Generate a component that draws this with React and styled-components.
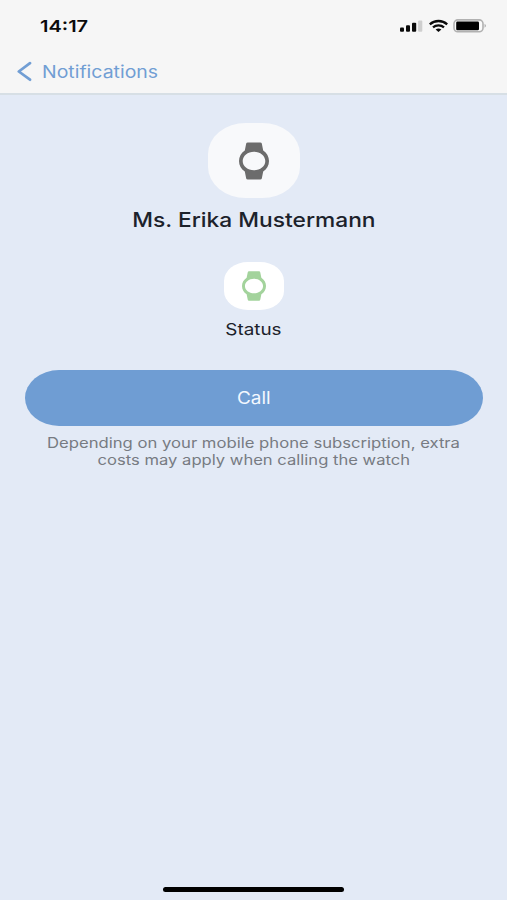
import React from "react";
import styled, { createGlobalStyle } from "styled-components";

const GlobalStyle = createGlobalStyle`
  * { box-sizing: border-box; }
  body { margin: 0; background: #e3eaf6; font-family: Inter, "Liberation Sans", sans-serif; }
`;

const Screen = styled.div`
  height: 900px;
  display: flex;
  flex-direction: column;
  background: #e3eaf6;
  overflow: hidden;
`;

const Header = styled.header`
  height: 95px;
  background: #f6f6f6;
  border-bottom: 2px solid #d7dfe5;
`;

const StatusBar = styled.div`
  height: 50px;
  padding: 1px 19px 0 40px;
  display: flex;
  align-items: center;
  justify-content: space-between;
`;

const Indicators = styled.div`
  display: flex;
  align-items: center;
  gap: 5px;
`;

const Wide = styled.span`
  display: inline-block;
  white-space: nowrap;
  transform: scaleX(${(p) => p.$x});
  transform-origin: ${(p) => p.$origin || "center"};
`;

const Time = styled.span`
  font-size: 16.4px;
  line-height: 20px;
  font-weight: 600;
  color: #0b0b0b;
`;

const BackLink = styled.button`
  display: flex;
  align-items: center;
  gap: 9px;
  height: 43px;
  padding: 0 0 0 17px;
  border: 0;
  background: none;
  color: #719ed4;
  font: 400 17px/22px Inter, "Liberation Sans", sans-serif;
`;

const Content = styled.main`
  flex: 1;
  display: flex;
  flex-direction: column;
  align-items: center;
  padding: 28px 25px 0;
`;

const Avatar = styled.div`
  width: 92px;
  height: 75px;
  border-radius: 38px / 31px;
  background: #f8f9fb;
  color: #6c6c6c;
  display: flex;
  align-items: center;
  justify-content: center;
`;

const StatusTile = styled(Avatar)`
  width: 60px;
  height: 48px;
  margin-top: 29px;
  border-radius: 24px / 19px;
  background: #fff;
  color: #a3d39c;
`;

const Name = styled.h1`
  margin: 9px 0 0;
  font-size: 20px;
  line-height: 26px;
  font-weight: 500;
  color: #1c222b;
`;

const StatusLabel = styled.div`
  margin-top: 8px;
  font-size: 16.4px;
  line-height: 22px;
  color: #1c222b;
`;

const CallButton = styled.button`
  width: 458px;
  height: 56px;
  margin-top: 30px;
  padding: 0;
  border: 0;
  border-radius: 34px / 28px;
  background: #6f9dd3;
  color: #f3f8ff;
  font: 400 16.6px/22px Inter, "Liberation Sans", sans-serif;
`;

const Note = styled.p`
  margin: 8px 0 0;
  display: flex;
  flex-direction: column;
  align-items: center;
  font-size: 14px;
  line-height: 17px;
  color: #777b82;
`;

const HomeArea = styled.footer`
  height: 14px;
  display: flex;
  justify-content: center;
`;

const HomeIndicator = styled.div`
  width: 181px;
  height: 5px;
  margin-top: 1px;
  border-radius: 3px;
  background: #000;
`;

const Signal = () => (
  <svg width="24" height="14" viewBox="0 0 24 14">
    <g fill="#0a0a0a">
      <rect x="0" y="8.6" width="4" height="4.2" rx="1" />
      <rect x="6" y="6.2" width="4" height="6.6" rx="1" />
      <rect x="12" y="3.8" width="4.2" height="9" rx="1" />
    </g>
    <rect x="18.1" y="1.4" width="4.2" height="11.4" rx="1" fill="#cfcfcf" />
  </svg>
);

const Wifi = () => (
  <svg width="19" height="14" viewBox="0 0 19 14" fill="none" stroke="#0a0a0a" strokeWidth="2.3">
    <path d="M.8 5.3C5.7.9 13.3.9 18.2 5.3" />
    <path d="M4 8.3C7 5.7 12 5.7 15 8.3" />
    <path d="M6.6 10.4Q9.5 8.4 12.4 10.4L9.5 12.9Z" fill="#0a0a0a" stroke="none" />
  </svg>
);

const Battery = () => (
  <svg width="35" height="14" viewBox="0 0 35 14">
    <rect x="1" y="0.9" width="29" height="11.9" rx="3.8" fill="#fafafa" stroke="#b1b1b1" strokeWidth="1.6" />
    <rect x="3.2" y="2.5" width="22.8" height="8.7" rx="1.2" fill="#000" />
    <path d="M31.6 4.8Q34.2 6.8 31.6 8.8Z" fill="#a5a5a5" />
  </svg>
);

const Chevron = () => (
  <svg width="16" height="22" viewBox="0 0 16 22" fill="none" stroke="#719ed4" strokeWidth="2.7" strokeLinecap="round" strokeLinejoin="round">
    <path d="M13 2.1 1.8 10.5 13 18.7" />
  </svg>
);

const Watch = ({ width, height }) => (
  <svg width={width} height={height} viewBox="0 0 30 38" preserveAspectRatio="none" fill="currentColor">
    <path
      fillRule="evenodd"
      d="M8.7.4H21.3Q22.5.4 22.8 1.5L24.2 8.4C27.8 10.9 30 14.6 30 19S27.8 27.1 24.2 29.6L22.8 36.5Q22.5 37.6 21.3 37.6H8.7Q7.5 37.6 7.2 36.5L5.8 29.6C2.2 27.1 0 23.4 0 19S2.2 10.9 5.8 8.4L7.2 1.5Q7.5.4 8.7.4ZM15 9.7C8.7 9.7 3.7 13.8 3.7 19S8.7 28.3 15 28.3 26.3 24.2 26.3 19 21.3 9.7 15 9.7Z"
    />
  </svg>
);

export default function App() {
  return (
    <>
      <GlobalStyle />
      <Screen>
        <Header>
          <StatusBar>
            <Time><Wide $x={1.22} $origin="left">14:17</Wide></Time>
            <Indicators>
              <Signal />
              <Wifi />
              <Battery />
            </Indicators>
          </StatusBar>
          <BackLink>
            <Chevron />
            <Wide $x={1.145} $origin="left">Notifications</Wide>
          </BackLink>
        </Header>
        <Content>
          <Avatar><Watch width={30} height={38} /></Avatar>
          <Name><Wide $x={1.138}>Ms. Erika Mustermann</Wide></Name>
          <StatusTile><Watch width={24} height={30} /></StatusTile>
          <StatusLabel><Wide $x={1.15}>Status</Wide></StatusLabel>
          <CallButton><Wide $x={1.14}>Call</Wide></CallButton>
          <Note>
            <Wide $x={1.19}>Depending on your mobile phone subscription, extra</Wide>
            <Wide $x={1.185}>costs may apply when calling the watch</Wide>
          </Note>
        </Content>
        <HomeArea><HomeIndicator /></HomeArea>
      </Screen>
    </>
  );
}
